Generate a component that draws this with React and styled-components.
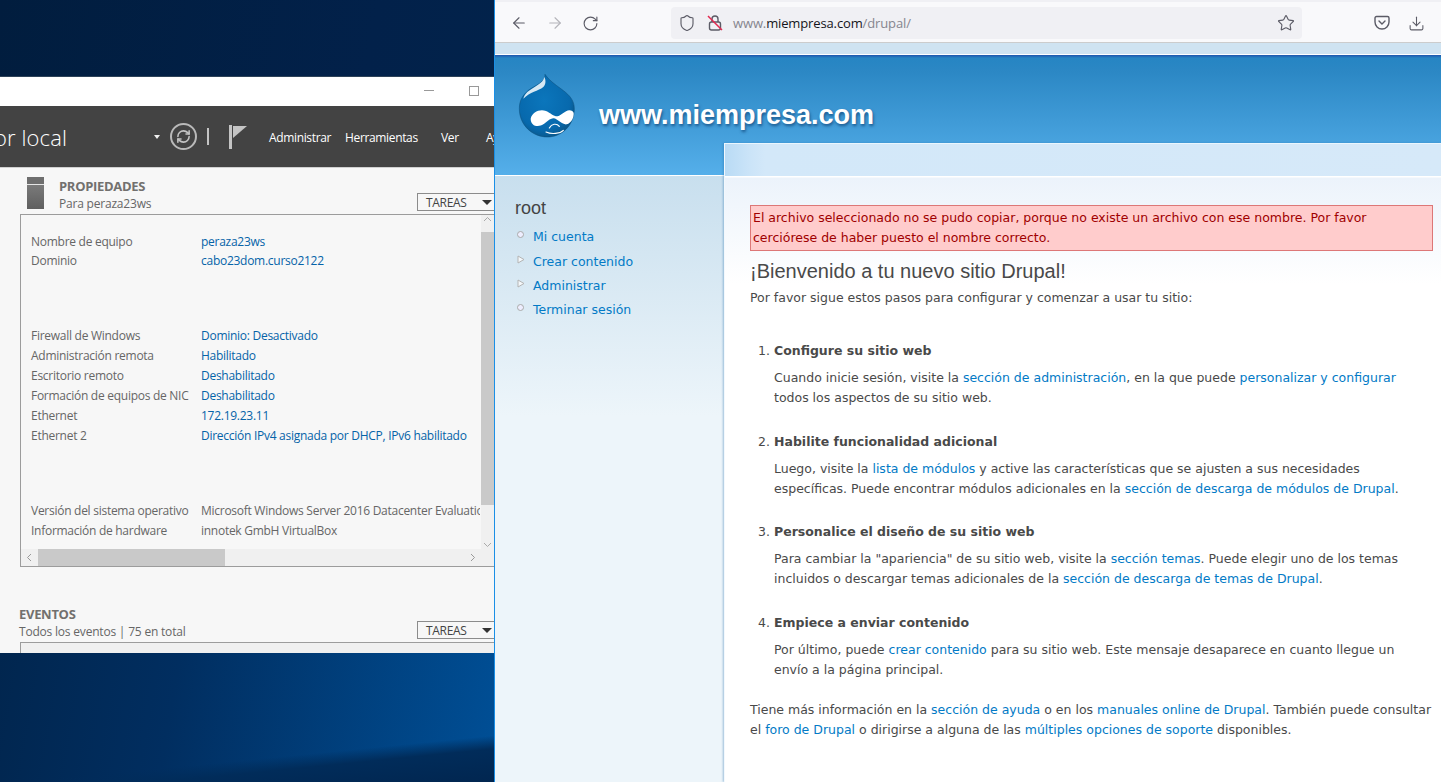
import React from 'react';
import styled, {createGlobalStyle} from 'styled-components';
import {ArrowLeft, ArrowRight, RotateCw, Shield, Star, Download, RefreshCw} from 'lucide-react';

const GlobalStyle = createGlobalStyle`
  html, body {
    margin: 0;
    padding: 0;
    width: 1441px;
    height: 782px;
    overflow: hidden;
  }
  * { box-sizing: border-box; }
`;

const Screen = styled.div`
  display: flex;
  width: 1441px;
  height: 782px;
  overflow: hidden;
`;

/* left half: desktop with the server manager window */
const Desktop = styled.div`
  width: 494px;
  height: 782px;
  padding-top: 76px;
  flex-shrink: 0;
  background:
    linear-gradient(174.3deg, transparent 0, transparent 94.4%, #012c5a 96%, #012650 100%),
    linear-gradient(100deg, #01264f 0%, #012e60 35%, #004f96 100%) bottom / 100% 130px no-repeat,
    linear-gradient(100deg, #011d3e 0%, #02214a 60%, #02244c 100%);
`;

const ServerWindow = styled.div`
  height: 577px;
  background: #f7f7f7;
  font-family: "Open Sans", "Noto Sans", sans-serif;
  overflow: hidden;
`;

const TitleBar = styled.div`
  display: flex;
  justify-content: flex-end;
  align-items: center;
  height: 30px;
  padding: 0 15px 2px 0;
  gap: 35px;
  background: #fff;
  border-top: 1px solid #2d4258;
`;

const MinButton = styled.span`
  width: 10px;
  height: 1px;
  background: #999;
`;

const MaxButton = styled.span`
  width: 10px;
  height: 10px;
  border: 1px solid #999;
`;

const DarkBar = styled.div`
  display: flex;
  align-items: center;
  height: 62px;
  background: #434343;
  color: #fff;
  border-bottom: 1px solid #d0d0d0;
  white-space: nowrap;
  overflow: hidden;
`;

const BarTitle = styled.div`
  display: flex;
  justify-content: flex-end;
  width: 67px;
  margin-top: 1px;
  overflow: hidden;
  flex-shrink: 0;
  font-size: 22px;
  font-weight: 300;
  letter-spacing: 0.1px;
`;

const Caret = styled.span`
  flex-shrink: 0;
  width: 0;
  height: 0;
  margin: 0 10px 0 87px;
  border-left: 3.5px solid transparent;
  border-right: 3.5px solid transparent;
  border-top: 4px solid #f0f0f0;
`;

const SyncCircle = styled.span`
  display: flex;
  flex-shrink: 0;
  align-items: center;
  justify-content: center;
  width: 27px;
  height: 27px;
  border: 2px solid #b9b9b9;
  border-radius: 50%;
  color: #c4c4c4;
`;

const Divider = styled.span`
  flex-shrink: 0;
  width: 2px;
  height: 17px;
  margin: 0 20px 0 10px;
  background: #c4c4c4;
`;

const FlagWrap = styled.span`
  display: flex;
  flex-shrink: 0;
  margin-right: 22px;
`;

const BarMenu = styled.span`
  font-size: 12px;
  color: #fff;
  width: ${({$w}) => $w}px;
  margin-top: 2px;
  flex-shrink: 0;
  letter-spacing: -0.35px;
`;

const Section = styled.div`
  display: flex;
  align-items: flex-start;
  justify-content: space-between;
  padding: ${({$top}) => $top}px 0 0 ${({$left}) => $left}px;
  height: ${({$h}) => $h}px;
`;

const SectionHead = styled.div`
  display: flex;
  gap: 15px;
`;

const ServerGlyph = styled.div`
  width: 17px;
  height: 32px;
  margin-top: 9px;
  border-top: 7px solid #6e6e6e;
  background: linear-gradient(#7b7b7b, #5f5f5f);
  box-shadow: inset 0 1px 0 #e5e5e5;
`;

const HeadText = styled.div`
  padding-top: ${({$top}) => $top || 0}px;
`;

const HeadTitle = styled.div`
  font-size: 13px;
  font-weight: 700;
  line-height: 17px;
  color: #72706e;
  letter-spacing: -0.3px;
`;

const HeadSub = styled.div`
  font-size: 12px;
  line-height: 17px;
  color: #666;
  letter-spacing: -0.2px;
`;

const TaskButton = styled.div`
  display: flex;
  align-items: center;
  justify-content: space-between;
  width: 77px;
  height: 18px;
  margin-top: ${({$top}) => $top}px;
  padding: 0 0 0 8px;
  font-size: 12px;
  color: #444;
  border: 1px solid #8c8c8c;
  border-right: none;
  letter-spacing: -0.3px;
`;

const TaskCaret = styled.span`
  width: 0;
  height: 0;
  border-left: 5px solid transparent;
  border-right: 5px solid transparent;
  border-top: 5px solid #333;
  margin-right: 2px;
`;

const PropsPanel = styled.div`
  display: flex;
  flex-direction: column;
  height: 353px;
  margin-left: 20px;
  border: 1px solid #9c9c9c;
  border-right: none;
  overflow: hidden;
`;

const PanelBody = styled.div`
  display: flex;
  flex: 1;
  min-height: 0;
`;

const PanelRows = styled.div`
  width: 460px;
  padding: 17px 0 0 10px;
  overflow: hidden;
`;

const RowGroup = styled.div`
  margin-bottom: ${({$gap}) => $gap}px;
`;

const PropRow = styled.div`
  display: flex;
  height: ${({$h}) => $h || 20}px;
  line-height: 20px;
  font-size: 12px;
  white-space: nowrap;
  letter-spacing: -0.27px;
`;

const PropName = styled.span`
  width: 170px;
  flex-shrink: 0;
  color: #666;
`;

const PropValue = styled.span`
  color: ${({$plain}) => ($plain ? '#666' : '#0563a8')};
`;

const VScroll = styled.div`
  display: flex;
  flex-direction: column;
  justify-content: space-between;
  align-items: center;
  width: 13px;
  margin-left: 1px;
  background: linear-gradient(#f0f0f0 0, #f0f0f0 17px, #c9c9c9 17px, #c9c9c9 290px, #f0f0f0 290px);
  color: #aaa;
  font-size: 9px;
`;

const HScroll = styled.div`
  display: flex;
  align-items: center;
  height: 17px;
  background: #f0f0f0;
  color: #999;
`;

const HArrow = styled.span`
  display: flex;
  justify-content: center;
  align-items: center;
  width: 17px;
  flex-shrink: 0;
  margin-right: ${({$right}) => $right || 0}px;
`;

const HThumb = styled.div`
  width: 187px;
  height: 17px;
  background: #c9c9c9;
`;

const HTrack = styled.div`
  flex: 1;
`;

const EventsFrame = styled.div`
  height: 20px;
  margin-left: 20px;
  background: #f0f0f0;
  border-top: 1px solid #9c9c9c;
  border-left: 1px solid #9c9c9c;
`;

const Seam = styled.div`
  width: 1px;
  flex-shrink: 0;
  background: #1a8fe6;
`;

/* right half: firefox and the drupal page */
const Browser = styled.div`
  flex: 1;
  display: flex;
  flex-direction: column;
  min-width: 0;
  background: #f9f9fb;
`;

const Toolbar = styled.div`
  display: flex;
  align-items: center;
  height: 43px;
  padding: 2px 15px 0 15px;
  background: #f9f9fb;
  border-top: 2px solid #f0f0f4;
  border-bottom: 1px solid #ccc;
  color: #5b5b66;
`;

const NavButton = styled.span`
  display: flex;
  width: 36px;
  color: ${({$off}) => ($off ? '#b4b4ba' : '#5b5b66')};
`;

const UrlBar = styled.div`
  display: flex;
  align-items: center;
  width: 631px;
  height: 32px;
  margin-left: 53px;
  padding: 0 7px 0 7px;
  background: #f0f0f4;
  border-radius: 4px;
`;

const LockWrap = styled.span`
  display: flex;
  margin-left: 10px;
`;

const UrlText = styled.div`
  flex: 1;
  margin-left: 9px;
  font-family: "Open Sans", "Noto Sans", sans-serif;
  font-size: 13px;
  color: #85858e;
  letter-spacing: -0.13px;
`;

const UrlHost = styled.span`
  color: #15141a;
`;

const ToolRight = styled.div`
  display: flex;
  gap: 18px;
  margin-left: 72px;
`;

const Page = styled.div`
  flex: 1;
  display: flex;
  flex-direction: column;
  min-height: 0;
  font-family: "DejaVu Sans", Verdana, sans-serif;
  font-size: 12.5px;
  line-height: 20px;
  color: #494949;
  background: #edf5fa;
`;

const TopStrip = styled.div`
  height: 12px;
  background: #cfe3f1;
  border-bottom: 1px solid #fff;
  flex-shrink: 0;
`;

const Header = styled.div`
  display: flex;
  height: 121px;
  flex-shrink: 0;
  padding: 19px 0 0 21px;
  background: linear-gradient(#1e55ad 0, #2685c3 3px, #2b87c4 15px, #55afea 100%);
  border-bottom: 1px solid #fff;
`;

const SiteName = styled.h1`
  margin: 25px 0 0 24px;
  font-family: "Liberation Sans", Arial, sans-serif;
  font-size: 27px;
  line-height: 32px;
  font-weight: 700;
  color: #fff;
  text-shadow: 1px 2px 3px rgba(10, 60, 110, 0.7);
`;

const Columns = styled.div`
  flex: 1;
  display: flex;
  min-height: 0;
`;

const Sidebar = styled.div`
  width: 229px;
  flex-shrink: 0;
  padding: 20px 0 0 20px;
  background: linear-gradient(#c8dfee 0, #edf5fa 240px, #edf5fa 100%);
`;

const SideTitle = styled.h3`
  margin: 0 0 5px;
  font-family: "Liberation Sans", Arial, sans-serif;
  font-size: 18px;
  line-height: 24px;
  font-weight: 400;
  color: #444;
`;

const SideItem = styled.div`
  display: flex;
  align-items: center;
  height: 24.4px;
`;

const Bullet = styled.span`
  width: 7px;
  height: 7px;
  margin: -5px 9px 0 2px;
  flex-shrink: 0;
  background: #eef;
  border: 1px solid #aaa;
  border-radius: 50%;
`;

const ArrowWrap = styled.span`
  display: flex;
  margin: -5px 8px 0 2px;
  flex-shrink: 0;
`;

const A = styled.a`
  color: #027ac6;
  text-decoration: none;
`;

const Main = styled.div`
  flex: 1;
  min-width: 0;
  margin-top: -33px;
  padding: 61px 0 0 25px;
  white-space: nowrap;
  background:
    linear-gradient(90deg, #b9dbf5 0, #cbe4f8 25px, #d3e8f9 40px, #d6e9f9 100%) top / 100% 32px no-repeat,
    linear-gradient(#fff 0, #fff 33px, #ecf3fb 34px, #fff 140px);
  border-top: 1px solid #eaf6fe;
  border-left: 1px solid #f2f8fd;
  box-shadow: -1px 0 2px rgba(40, 110, 170, 0.4);
`;

const ErrorBox = styled.div`
  width: 683px;
  height: 46px;
  margin-bottom: 7px;
  padding: 2px 2px;
  color: #a00000;
  background: #ffcccc;
  border: 1px solid #dd7777;
`;

const Welcome = styled.h2`
  margin: 0;
  font-family: "Liberation Sans", Arial, sans-serif;
  font-size: 20px;
  line-height: 26px;
  font-weight: 400;
  color: #494949;
`;

const Lead = styled.p`
  margin: 4px 0 0;
`;

const Steps = styled.ol`
  margin: 33px 0 0;
  padding: 0 0 0 24px;
`;

const Step = styled.li`
  margin-bottom: 23.5px;
  &:last-child { margin-bottom: 20px; }
`;

const StepTitle = styled.div`
  font-weight: 700;
  margin-bottom: 7px;
`;

const StepText = styled.div``;

const Outro = styled.p`
  margin: 0;
  line-height: 20.5px;
`;

const DrupalDrop = () => (
  <svg width="59" height="65" viewBox="18 21 177 195">
    <defs>
      <radialGradient id="drop" cx="0.45" cy="0.42" r="0.62">
        <stop offset="0" stopColor="#0b76bc" />
        <stop offset="0.75" stopColor="#0769ad" />
        <stop offset="1" stopColor="#0a5586" />
      </radialGradient>
    </defs>
    <path d="M105 22C108 45 75 55 55 70C38 85 28 100 28 125C28 175 68 210 112 210C155 210 193 175 193 125C193 75 135 65 105 22Z" fill="url(#drop)" stroke="#0d4f7a" strokeWidth="1.5" />
    <path d="M103 30C100 50 70 60 52 75C45 82 42 88 40 95C60 75 85 72 100 60C108 52 108 40 103 30Z" fill="#d8e9f4" />
    <path d="M62 155C66 135 90 125 108 132C122 138 130 148 142 148C152 148 165 130 178 130C185 130 190 134 191 138C192 150 185 168 170 172C158 174 145 158 132 154C122 152 110 165 100 172C85 182 62 178 62 155Z" fill="#fff" />
    <path d="M118 183C125 170 140 168 148 178M108 195C125 203 150 200 160 190" stroke="#fff" strokeWidth="3.500" fill="none" strokeLinecap="round" />
  </svg>
);

const OpenLock = () => (
  <svg width="18" height="18" viewBox="0 0 18 18" fill="none" strokeWidth="1.4">
    <path d="M6 8V5a3 3 0 0 1 6 0v3" stroke="#5b5b66" />
    <rect x="3.5" y="8" width="11" height="8" rx="2" stroke="#5b5b66" />
    <path d="M2 2l14 14" stroke="#e22850" strokeWidth="1.5" />
  </svg>
);

const PocketIcon = () => (
  <svg width="16" height="16" viewBox="0 0 16 16" fill="none" stroke="#5b5b66" strokeWidth="1.4">
    <path d="M2.500 1.500h11a1.500 1.500 0 0 1 1.500 1.500v4a7 7 0 0 1-14 0V3a1.500 1.500 0 0 1 1.500-1.500z" />
    <path d="M5 6l3 3 3-3" strokeLinecap="round" />
  </svg>
);

const FlagIcon = () => (
  <svg width="18" height="24" viewBox="0 0 18 24">
    <path d="M0 0h3v24H0z" fill="#c4c4c4" />
    <path d="M4 1h14L4 13z" fill="#c4c4c4" />
  </svg>
);

const MenuArrow = () => (
  <svg width="8" height="9" viewBox="0 0 8 9">
    <path d="M1 1l6 3.500-6 3.500z" fill="#f4f8fb" stroke="#b4b4b4" strokeWidth="1" strokeLinejoin="round" />
  </svg>
);

const Chevron = ({dir}) => (
  <svg width="9" height="9" viewBox="0 0 9 9" fill="none" stroke="currentColor" strokeWidth="1">
    {dir === 'up' && <path d="M1 6l3.500-3.500L8 6" />}
    {dir === 'down' && <path d="M1 3l3.500 3.500L8 3" />}
    {dir === 'left' && <path d="M6 1L2.500 4.500 6 8" />}
    {dir === 'right' && <path d="M3 1l3.500 3.500L3 8" />}
  </svg>
);

const App = () => (
  <Screen>
    <GlobalStyle />
    <Desktop>
      <ServerWindow>
        <TitleBar>
          <MinButton />
          <MaxButton />
        </TitleBar>
        <DarkBar>
          <BarTitle>Servidor local</BarTitle>
          <Caret />
          <SyncCircle><RefreshCw size={15} strokeWidth={2.5} /></SyncCircle>
          <Divider />
          <FlagWrap><FlagIcon /></FlagWrap>
          <BarMenu $w={76}>Administrar</BarMenu>
          <BarMenu $w={96}>Herramientas</BarMenu>
          <BarMenu $w={45}>Ver</BarMenu>
          <BarMenu $w={40}>Ayuda</BarMenu>
        </DarkBar>
        <Section $left={27} $top={0} $h={46}>
          <SectionHead>
            <ServerGlyph />
            <HeadText $top={10}>
              <HeadTitle>PROPIEDADES</HeadTitle>
              <HeadSub>Para peraza23ws</HeadSub>
            </HeadText>
          </SectionHead>
          <TaskButton $top={25}>TAREAS<TaskCaret /></TaskButton>
        </Section>
        <PropsPanel>
          <PanelBody>
            <PanelRows>
              <RowGroup $gap={55}>
                <PropRow $h={19}><PropName>Nombre de equipo</PropName><PropValue>peraza23ws</PropValue></PropRow>
                <PropRow $h={20}><PropName>Dominio</PropName><PropValue>cabo23dom.curso2122</PropValue></PropRow>
              </RowGroup>
              <RowGroup $gap={55}>
                <PropRow><PropName>Firewall de Windows</PropName><PropValue>Dominio: Desactivado</PropValue></PropRow>
                <PropRow><PropName>Administración remota</PropName><PropValue>Habilitado</PropValue></PropRow>
                <PropRow><PropName>Escritorio remoto</PropName><PropValue>Deshabilitado</PropValue></PropRow>
                <PropRow><PropName>Formación de equipos de NIC</PropName><PropValue>Deshabilitado</PropValue></PropRow>
                <PropRow><PropName>Ethernet</PropName><PropValue>172.19.23.11</PropValue></PropRow>
                <PropRow><PropName>Ethernet 2</PropName><PropValue>Dirección IPv4 asignada por DHCP, IPv6 habilitado</PropValue></PropRow>
              </RowGroup>
              <RowGroup $gap={0}>
                <PropRow><PropName>Versión del sistema operativo</PropName><PropValue $plain>Microsoft Windows Server 2016 Datacenter Evaluation</PropValue></PropRow>
                <PropRow><PropName>Información de hardware</PropName><PropValue $plain>innotek GmbH VirtualBox</PropValue></PropRow>
              </RowGroup>
            </PanelRows>
            <VScroll>
              <Chevron dir="up" />
              <Chevron dir="down" />
            </VScroll>
          </PanelBody>
          <HScroll>
            <HArrow><Chevron dir="left" /></HArrow>
            <HThumb />
            <HTrack />
            <HArrow $right={13}><Chevron dir="right" /></HArrow>
          </HScroll>
        </PropsPanel>
        <Section $left={19} $top={39} $h={75}>
          <div>
            <HeadTitle>EVENTOS</HeadTitle>
            <HeadSub>Todos los eventos | 75 en total</HeadSub>
          </div>
          <TaskButton $top={15}>TAREAS<TaskCaret /></TaskButton>
        </Section>
        <EventsFrame />
      </ServerWindow>
    </Desktop>
    <Seam />
    <Browser>
      <Toolbar>
        <NavButton><ArrowLeft size={18} strokeWidth={1.5} /></NavButton>
        <NavButton $off><ArrowRight size={18} strokeWidth={1.5} /></NavButton>
        <NavButton><RotateCw size={17} strokeWidth={1.6} /></NavButton>
        <UrlBar>
          <Shield size={18} strokeWidth={1.5} />
          <LockWrap><OpenLock /></LockWrap>
          <UrlText>www.<UrlHost>miempresa.com</UrlHost>/drupal/</UrlText>
          <Star size={18} strokeWidth={1.5} />
        </UrlBar>
        <ToolRight>
          <PocketIcon />
          <Download size={17} strokeWidth={1.5} />
        </ToolRight>
      </Toolbar>
      <Page>
        <TopStrip />
        <Header>
          <DrupalDrop />
          <SiteName>www.miempresa.com</SiteName>
        </Header>
        <Columns>
          <Sidebar>
            <SideTitle>root</SideTitle>
            <SideItem><Bullet /><A>Mi cuenta</A></SideItem>
            <SideItem><ArrowWrap><MenuArrow /></ArrowWrap><A>Crear contenido</A></SideItem>
            <SideItem><ArrowWrap><MenuArrow /></ArrowWrap><A>Administrar</A></SideItem>
            <SideItem><Bullet /><A>Terminar sesión</A></SideItem>
          </Sidebar>
          <Main>
            <ErrorBox>
              El archivo seleccionado no se pudo copiar, porque no existe un archivo con ese nombre. Por favor<br />
              cerciórese de haber puesto el nombre correcto.
            </ErrorBox>
            <Welcome>¡Bienvenido a tu nuevo sitio Drupal!</Welcome>
            <Lead>Por favor sigue estos pasos para configurar y comenzar a usar tu sitio:</Lead>
            <Steps>
              <Step>
                <StepTitle>Configure su sitio web</StepTitle>
                <StepText>
                  Cuando inicie sesión, visite la <A>sección de administración</A>, en la que puede <A>personalizar y configurar</A><br />
                  todos los aspectos de su sitio web.
                </StepText>
              </Step>
              <Step>
                <StepTitle>Habilite funcionalidad adicional</StepTitle>
                <StepText>
                  Luego, visite la <A>lista de módulos</A> y active las características que se ajusten a sus necesidades<br />
                  específicas. Puede encontrar módulos adicionales en la <A>sección de descarga de módulos de Drupal</A>.
                </StepText>
              </Step>
              <Step>
                <StepTitle>Personalice el diseño de su sitio web</StepTitle>
                <StepText>
                  Para cambiar la "apariencia" de su sitio web, visite la <A>sección temas</A>. Puede elegir uno de los temas<br />
                  incluidos o descargar temas adicionales de la <A>sección de descarga de temas de Drupal</A>.
                </StepText>
              </Step>
              <Step>
                <StepTitle>Empiece a enviar contenido</StepTitle>
                <StepText>
                  Por último, puede <A>crear contenido</A> para su sitio web. Este mensaje desaparece en cuanto llegue un<br />
                  envío a la página principal.
                </StepText>
              </Step>
            </Steps>
            <Outro>
              Tiene más información en la <A>sección de ayuda</A> o en los <A>manuales online de Drupal</A>. También puede consultar<br />
              el <A>foro de Drupal</A> o dirigirse a alguna de las <A>múltiples opciones de soporte</A> disponibles.
            </Outro>
          </Main>
        </Columns>
      </Page>
    </Browser>
  </Screen>
);

export default App;
